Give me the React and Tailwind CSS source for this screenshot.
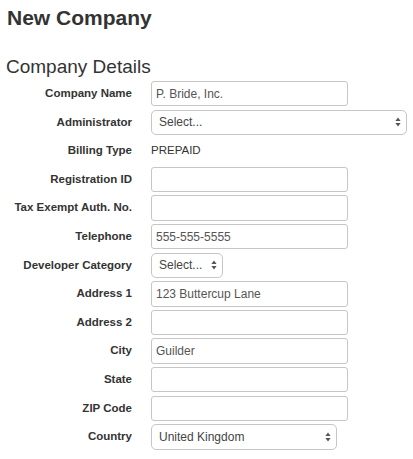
import React from "react";

const Arrows = () => (
  <svg width="6" height="10" viewBox="0 0 6 10" className="shrink-0">
    <path d="M3 0.5 L5.6 4 L0.4 4 Z" fill="#555" />
    <path d="M3 9.5 L5.6 6 L0.4 6 Z" fill="#555" />
  </svg>
);

const TextInput = ({ value = "" }) => (
  <div className="h-[25.5px] w-[197px] border border-[#c6c6c6] rounded-[3px] bg-white flex items-center pl-[4px] text-[12px] text-[#555] leading-none">
    {value}
  </div>
);

const Select = ({ value, width }) => (
  <div
    className={`h-[25.5px] ${width} border border-[#c6c6c6] rounded-[5px] bg-white flex items-center justify-between pl-[7px] pr-[5px] text-[12px] text-[#444] leading-none`}
  >
    <span>{value}</span>
    <Arrows />
  </div>
);

const rows = [
  ["Company Name", <TextInput value="P. Bride, Inc." />],
  ["Administrator", <Select value="Select..." width="w-[256px]" />],
  [
    "Billing Type",
    <div className="h-[25.5px] flex items-center text-[11.5px] text-[#333]">PREPAID</div>,
  ],
  ["Registration ID", <TextInput />],
  ["Tax Exempt Auth. No.", <TextInput />],
  ["Telephone", <TextInput value="555-555-5555" />],
  ["Developer Category", <Select value="Select..." width="w-[72px]" />],
  ["Address 1", <TextInput value="123 Buttercup Lane" />],
  ["Address 2", <TextInput />],
  ["City", <TextInput value="Guilder" />],
  ["State", <TextInput />],
  ["ZIP Code", <TextInput />],
  ["Country", <Select value="United Kingdom" width="w-[186px]" />],
];

export default function App() {
  return (
    <div
      className="w-[413px] h-[459px] bg-white text-[#333] overflow-hidden"
      style={{ fontFamily: '"Liberation Sans", Arial, Helvetica, sans-serif' }}
    >
      <h1 className="pl-[7px] pt-[6px] text-[21px] leading-[23px] font-bold text-[#333]">
        New Company
      </h1>
      <h2 className="pl-[6px] mt-[26.6px] text-[19px] leading-[21px] font-normal text-[#333]">
        Company Details
      </h2>
      <div className="mt-[4.4px] grid grid-cols-[132px_1fr] gap-x-[19px] gap-y-[3.1px]">
        {rows.map(([label, control], i) => (
          <React.Fragment key={i}>
            <div className="h-[25.5px] flex items-center justify-end text-[11.5px] font-bold text-[#333] whitespace-nowrap">
              {label}
            </div>
            <div className="flex items-center">{control}</div>
          </React.Fragment>
        ))}
      </div>
    </div>
  );
}
